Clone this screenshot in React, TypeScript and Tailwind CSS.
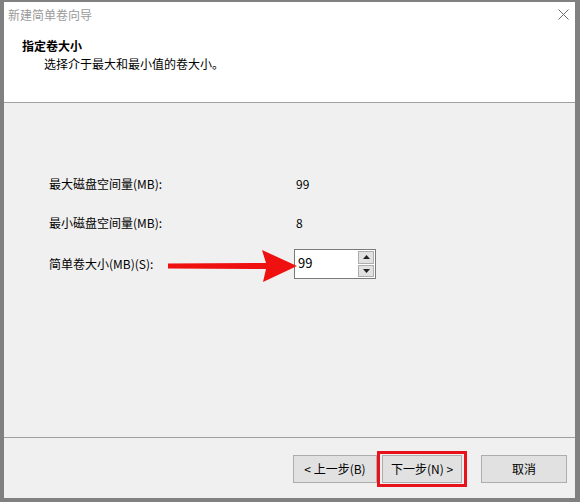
const font = { fontFamily: '"Segoe UI", "Noto Sans CJK SC", "Liberation Sans", sans-serif' };

function Spinner() {
  return (
    <div className="flex flex-col gap-[1px] py-[1px] pr-[1px]">
      <div className="flex h-[13px] w-[16px] items-center justify-center border border-[#adadad] bg-[#e1e1e1]">
        <svg width="7" height="4" viewBox="0 0 7 4">
          <path d="M0 4 L3.5 0 L7 4 Z" fill="#222" />
        </svg>
      </div>
      <div className="flex h-[13px] w-[16px] items-center justify-center border border-[#adadad] bg-[#e1e1e1]">
        <svg width="7" height="4" viewBox="0 0 7 4">
          <path d="M0 0 L3.5 4 L7 0 Z" fill="#222" />
        </svg>
      </div>
    </div>
  );
}

function Btn({ label, w }: { label: string; w: string }) {
  return (
    <div className={`flex h-[28px] items-center justify-center border border-[#adadad] bg-[#e1e1e1] text-[12px] text-black ${w}`}>
      {label}
    </div>
  );
}

export default function App() {
  return (
    <div className="h-[502px] w-[580px] bg-[#808080] pb-[4px] pl-[4px] pr-[5px] pt-[2px]" style={font}>
      <div className="flex h-[496px] w-[571px] flex-col bg-[#f0f0f0]">
        {/* header */}
        <div className="relative h-[101px] border-b border-[#a0a0a0] bg-white">
          <div className="pl-[4px] pt-[4px] text-[12px] leading-[17px] text-[#9a9a9a]">新建简单卷向导</div>
          <svg className="absolute right-[6px] top-[7px]" width="11" height="11" viewBox="0 0 11 11">
            <path d="M0.5 0.5 L10.5 10.5 M10.5 0.5 L0.5 10.5" stroke="#6a6a6a" strokeWidth="1" />
          </svg>
          <div className="pl-[18px] pt-[14px] text-[12px] font-bold leading-[17px] text-black">指定卷大小</div>
          <div className="pl-[40px] pt-[1px] text-[12px] leading-[17px] text-black">选择介于最大和最小值的卷大小。</div>
        </div>

        {/* body */}
        <div className="relative flex h-[335px] flex-col border-b border-[#a0a0a0] pl-[45px] pt-[72px] text-[12px] text-black">
          <div className="flex h-[17px] items-center">
            <span className="w-[247px]">最大磁盘空间量(MB):</span>
            <span>99</span>
          </div>
          <div className="mt-[22px] flex h-[17px] items-center">
            <span className="w-[247px]">最小磁盘空间量(MB):</span>
            <span>8</span>
          </div>
          <div className="mt-[18px] flex items-center">
            <span className="w-[245px]">简单卷大小(MB)(S):</span>
            <div className="flex h-[30px] w-[82px] items-stretch justify-between border border-[#7a7a7a] bg-white">
              <span className="pl-[3px] pt-[3px] text-[13px]">99</span>
              <Spinner />
            </div>
          </div>
          <svg className="absolute left-[162px] top-[145px]" width="132" height="36" viewBox="0 0 132 36">
            <path d="M2 15.5 L100 15 L96 2 L131 18 L97 34 L100 21 L2 20.5 Z" fill="#ef1010" />
          </svg>
        </div>

        {/* footer */}
        <div className="flex flex-1 items-center pl-[289px] pt-[1px]">
          <Btn label="< 上一步(B)" w="w-[84px]" />
          <div className="border-[3px] border-[#e8121a] px-[2px] py-[1px]">
            <Btn label="下一步(N) >" w="w-[80px]" />
          </div>
          <div className="ml-[14px]">
            <Btn label="取消" w="w-[86px]" />
          </div>
        </div>
      </div>
    </div>
  );
}
